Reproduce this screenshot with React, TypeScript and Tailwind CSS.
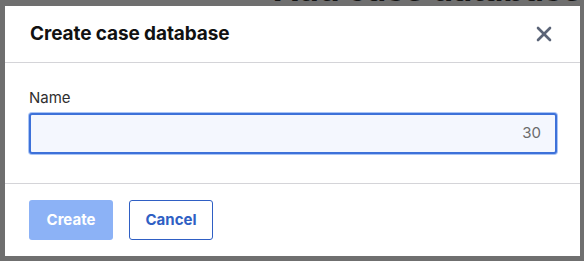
import { X } from "lucide-react";

const App = () => {
  return (
    <div className="relative h-[261px] w-[584px] overflow-hidden bg-[#6f6f6f] font-['Inter',sans-serif]">
      {/* page behind the modal */}
      <h1 className="mt-[-35px] ml-[274px] whitespace-nowrap text-[33px] leading-[1.5] font-bold text-[#141414]">
        Add case database
      </h1>

      <div className="absolute left-[5px] top-[6px] flex h-[250px] w-[575px] flex-col bg-white">
        <div className="flex h-[57px] items-center justify-between border-b border-[#d4d4d8] pl-[25px] pr-[24px]">
          <h2 className="text-[19px] font-bold tracking-[-0.1px] text-[#111111]">
            Create case database
          </h2>
          <button className="text-[#5b6477]">
            <X size={24} strokeWidth={2.6} />
          </button>
        </div>

        <div className="flex h-[121px] flex-col border-b border-[#d4d4d8] px-[24px] pt-[25px]">
          <label className="text-[15px] leading-[20px] text-[#2f2f2f]">Name</label>
          <div className="mt-[5px] flex h-[41px] w-[528px] items-center justify-end rounded-[3px] border-2 border-[#3d71d9] bg-[#f4f7fe] pr-[14px] shadow-[0_0_0_1px_#a9c4f5]">
            <span className="text-[15px] text-[#6b6b6b]">30</span>
          </div>
        </div>

        <div className="flex gap-[16px] px-[24px] pt-[16px]">
          <button className="h-[40px] w-[84px] rounded-[3px] bg-[#8cb2f6] text-[15px] font-bold text-white">
            Create
          </button>
          <button className="h-[40px] w-[84px] rounded-[3px] border border-[#2f5fc4] bg-white text-[15px] font-bold text-[#2f5fc4]">
            Cancel
          </button>
        </div>
      </div>
    </div>
  );
};

export default App;
